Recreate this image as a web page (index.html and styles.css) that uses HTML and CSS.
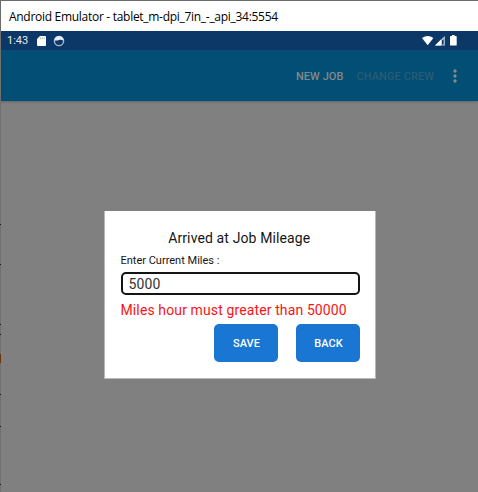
FILE: index.html
```html
<!DOCTYPE html>
<html lang="en">
<head>
<meta charset="utf-8">
<title>Android Emulator</title>
<link rel="stylesheet" href="styles.css">
</head>
<body>
<div class="window">
  <header class="titlebar"><span class="window-title">Android Emulator - tablet_m-dpi_7in_-_api_34:5554</span></header>
  <div class="statusbar">
    <span class="clock">1:43</span>
    <svg class="sd" width="9" height="10" viewBox="0 0 9 10"><path d="M3 0h5q1 0 1 1v8q0 1-1 1H1q-1 0-1-1V3z" fill="#fff"/><path d="M3.5 1.3v2M5.3 1.3v2M7.1 1.3v2" stroke="#8ea3bd" stroke-width=".7"/></svg>
    <svg class="face" width="12" height="12" viewBox="0 0 12 12"><circle cx="6" cy="6" r="4.6" fill="none" stroke="#a9b8cc" stroke-width="1.4"/><path d="M1.5 5.5A4.5 4.5 0 0 1 10.5 5.5Q8 4.2 6 5T1.5 5.5z" fill="#e9eef4"/></svg>
    <svg class="signals" width="36" height="12" viewBox="0 0 36 12">
      <path d="M0 3.1Q5.7-1.3 11.4 3.1L5.7 10.2z" fill="#fff"/>
      <path d="M13 10.6L22.800 1v9.600z" fill="#c3cedb"/><path d="M13 10.600l6-6v6z" fill="#fff"/><path d="M20 5.500l1.600-1.600v5.600H20z" fill="#0b3867"/>
      <path d="M30 0h2.600v1H34q.7 0 .7.700v8.200q0 .7-.7.700h-5.300q-.7 0-.7-.7V1.700q0-.7.700-.7H30z" fill="#fff"/>
    </svg>
  </div>
  <nav class="appbar">
    <span class="action new-job">NEW JOB</span>
    <span class="action change-crew">CHANGE CREW</span>
    <svg class="more" width="4" height="14" viewBox="0 0 4 14" fill="#84898c"><circle cx="2" cy="2" r="1.7"/><circle cx="2" cy="7" r="1.7"/><circle cx="2" cy="12" r="1.7"/></svg>
  </nav>
  <main class="screen">
    <section class="dialog">
      <h1 class="heading"><span>Arrived at Job Mileage</span></h1>
      <label class="label" for="miles"><span>Enter Current Miles :</span></label>
      <div class="field" id="miles"><span>5000</span></div>
      <p class="error"><span>Miles hour must greater than 50000</span></p>
      <div class="buttons"><button>SAVE</button><button>BACK</button></div>
    </section>
  </main>
  <svg class="edge" width="1" height="461" viewBox="0 0 1 461" shape-rendering="crispEdges">
    <path d="M0 0h1v461H0z" fill="#707070"/>
    <path d="M0 193h1v1H0zM0 233h1v1H0zM0 293h1v1H0zM0 303h1v1H0zM0 363h1v1H0zM0 395h1v1H0zM0 453h1v1H0z" fill="#161616"/>
    <path d="M0 323h1v9H0z" fill="#67370c"/>
  </svg>
</div>
</body>
</html>
```
FILE: styles.css
```css
* { box-sizing: border-box; }
body { margin: 0; overflow: hidden; background: #808080; font-family: Roboto, sans-serif; }
.window { position: relative; width: 478px; height: 492px; display: flex; flex-direction: column; }
.titlebar { height: 31px; flex: none; background: #fff; border-top: 1px solid #6b6b6b; border-left: 1px solid #6b6b6b; padding-left: 8px; line-height: 29px; white-space: nowrap; }
.window-title { font-family: "Open Sans", sans-serif; font-size: 12px; letter-spacing: -0.29px; color: #000; }
.statusbar { height: 19px; flex: none; background: #0b3867; display: flex; align-items: center; padding-left: 7px; color: #e8edf3; }
.clock { width: 30px; font-size: 11px; line-height: 19px; letter-spacing: 0; }
.face { margin-left: 7px; }
.signals { margin-left: auto; margin-right: 20px; }
.appbar { height: 51px; flex: none; background: #024e74; display: flex; align-items: center; justify-content: flex-end; padding-right: 21px; box-shadow: 0 1px 2px rgba(0,0,0,.22); position: relative; }
.action { font-size: 11px; font-weight: 500; line-height: 16px; white-space: nowrap; padding-top: 2px; }
.new-job { color: #84898c; margin-right: 13px; letter-spacing: 0.06px; }
.change-crew { color: #285c76; margin-right: 19px; letter-spacing: 0.08px; }
.screen { flex: 1; display: flex; justify-content: flex-start; align-items: flex-start; padding: 110px 0 0 104px; }
.dialog { width: 272px; height: 168px; background: #fff; border: solid #b8b8b8; border-width: 0 1px 1px; padding: 17px 15px 0 15.5px; }
.heading { margin: 0; padding-right: 2px; text-align: center; font-size: 14px; font-weight: 400; line-height: 20px; letter-spacing: 0.12px; color: #161616; white-space: nowrap; }
.label { display: block; margin-top: 6px; font-size: 11px; line-height: 14px; color: #161616; }
.field { margin-top: 4px; width: 239.5px; height: 23px; border: 2px solid #141414; border-radius: 5px; padding-left: 6px; font-size: 14px; line-height: 21px; letter-spacing: 0.1px; color: #333; }
.error { margin: 6px 0 0; font-size: 14px; line-height: 19px; letter-spacing: 0.12px; color: #f81414; white-space: nowrap; }
.buttons { width: 239.5px; display: flex; justify-content: flex-end; gap: 18px; margin-top: 4px; }
button { width: 64px; height: 38px; border: 0; border-radius: 5px; background: #1976d2; color: #fff; padding: 1px 0 0 1px; font: 500 11px/37px Roboto, sans-serif; }
.edge { position: absolute; left: 0; top: 31px; }
```
